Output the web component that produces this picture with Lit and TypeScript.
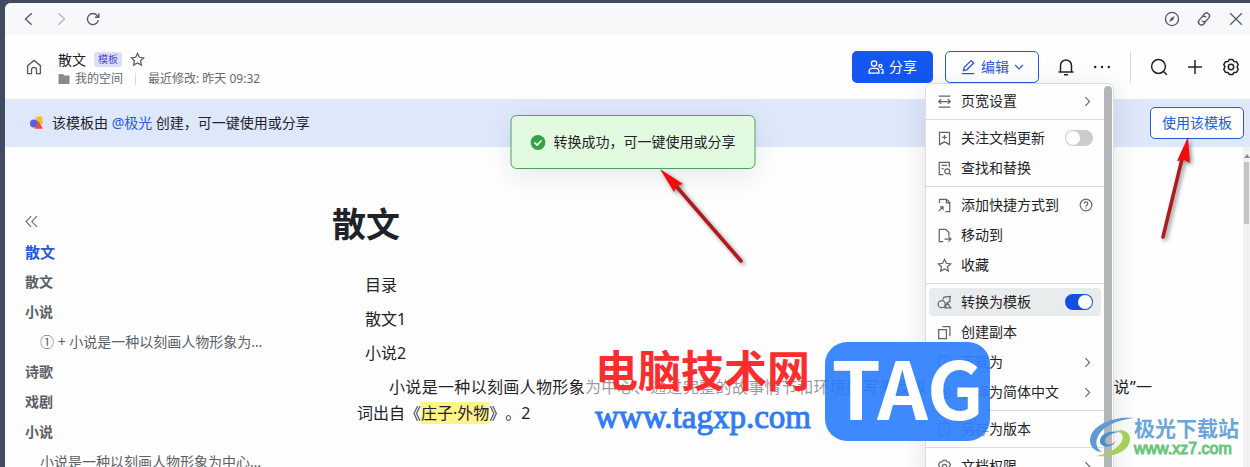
import { LitElement, html, css, svg, nothing } from "lit";
import { customElement, property } from "lit/decorators.js";
import { classMap } from "lit/directives/class-map.js";

/* Line icons, drawn on an 18 x 18 grid */
const ICONS: Record<string, unknown> = {
  back: svg`<path d="M12 2.5 5 9l7 6.5"/>`,
  forward: svg`<path d="M6 2.5 13 9l-7 6.5"/>`,
  reload: svg`<path d="M15 10.2A6.2 6.2 0 1 1 13.8 5.2L15.2 7M15.6 2.6V7h-4.4"/>`,
  compass: svg`<circle cx="9" cy="9" r="7.4"/><path d="M12.3 5.7 10.2 10.200 5.700 12.300 7.800 7.800Z" fill="currentColor" stroke="none"/>`,
  link: svg`<g transform="rotate(-50 9 9)"><path d="M8.200 12.300H4.500a3.300 3.300 0 0 1 0-6.600h4.200a3.300 3.300 0 0 1 3.200 4M9.800 5.700h3.700a3.300 3.300 0 0 1 0 6.600H9.300a3.300 3.300 0 0 1-3.200-4"/></g>`,
  close: svg`<path d="m2.500 2.500 13 13M15.500 2.500l-13 13"/>`,
  home: svg`<path d="M1.800 7.500 9 1.600l7.200 5.900v8.900h-4.400v-4.200a2.800 2.800 0 0 0-5.600 0v4.200H1.800Z"/>`,
  star: svg`<path d="m9 1.600 2.250 4.700 5.150.7-3.750 3.600.95 5.100L9 13.200l-4.600 2.500.95-5.100L1.600 7l5.150-.7Z"/>`,
  users: svg`<circle cx="6.800" cy="5.200" r="3"/><path d="M1.300 15.800v-2.300a3 3 0 0 1 3-3h4.900a3 3 0 0 1 3 3v2.300Z"/><circle cx="14" cy="7.700" r="1.700"/><path d="M14 11.300h1a2 2 0 0 1 2 2v2.500h-2.300"/>`,
  pencil: svg`<path d="m4 13 .8-3.700 7.700-7.500 2.900 2.800-7.700 7.600ZM2 16.500h14"/>`,
  down: svg`<path d="m2 5.500 7 7 7-7" stroke-width="2.200"/>`,
  right: svg`<path d="m5.500 2 7 7-7 7" stroke-width="1.800"/>`,
  bell: svg`<path d="M1.500 14.100h15M3.500 14V7.500a5.500 5.500 0 0 1 11 0V14M7 16.800h4"/>`,
  dots: svg`<g fill="currentColor" stroke="none"><circle cx="2.200" cy="9" r="1.200"/><circle cx="9" cy="9" r="1.200"/><circle cx="15.800" cy="9" r="1.200"/></g>`,
  search: svg`<circle cx="8.500" cy="8.500" r="6.900"/><path d="m13.500 13.500 3.300 3.300"/>`,
  plus: svg`<path d="M9 2v14M2 9h14"/>`,
  gear: svg`<path d="M7.300 1.500h3.400l1.300 2.100 2.500.1 1.700 2.900L15 9l1.200 2.400-1.700 2.900-2.500.1-1.300 2.100H7.300L6 14.400l-2.500-.1-1.700-2.900L3 9 1.800 6.600l1.700-2.900L6 3.600Z" stroke-linejoin="round"/><circle cx="9" cy="9" r="2.700"/>`,
  width: svg`<path d="M2 2.400h14M2 15.600h14M2 9h14M5 6.200 2 9l3 2.800M13 6.200 16 9l-3 2.800"/>`,
  follow: svg`<path d="M3 1.700h12v14.600l-6-3.300-6 3.300ZM9 4.700v5.600M6.200 7.500h5.600"/>`,
  find: svg`<path d="M7.500 16.300H2.700V1.700h12v5.800M5.500 5.300h6.500M5.500 9h2.500M14.800 14.800l2 2"/><circle cx="12.300" cy="12.300" r="3"/>`,
  shortcut: svg`<path d="M3 6V1.700h8.500L15.300 5.500v10.800H10M11.300 1.700v4h4M2 15.700l5-5M3.500 10.500H7.200v3.800"/>`,
  move: svg`<path d="M7.500 16.300H2.700V1.700h7.800l3.800 3.800v4M9 13.300h7.500M13.700 10.300l3 3-3 3"/>`,
  convert: svg`<path d="M7 5.500 8.500 2.500l7.500-.8-.8 6.300-3 1 4.300 6.500H9.500l3-6.500"/><circle cx="5.600" cy="11" r="4.200"/>`,
  copy: svg`<path d="M2 5.400h9.300v11H2ZM6.500 2h9v11.500"/>`,
  download: svg`<path d="M15.300 8V1.700H2.700v14.600h12.600v-2.500M7 11h9M13.300 8.200 16.200 11l-2.900 2.800"/>`,
  translate: svg`<circle cx="9" cy="9" r="7.300"/><path d="m6 12.200 3-7 3 7M7 10h4"/>`,
  version: svg`<path d="M8 16.300H2.700V1.700h12.600v8M5.800 5.500h6.400M5.800 9h4M10.500 13.500l2.300 2.300 4-4"/>`,
  help: svg`<circle cx="9" cy="9" r="7.500"/><path d="M6.700 7.200a2.300 2.300 0 1 1 3.500 2c-.8.500-1.200.8-1.200 1.700M9 12.300v1.300"/>`,
  collapse: svg`<path d="M8.500 1.500 1.500 9l7 7.500M16.500 1.500 9.500 9l7 7.500"/>`,
};

@customElement("line-icon")
class LineIcon extends LitElement {
  @property() name = "";
  static styles = css`
    :host { display: inline-flex; width: 16px; height: 16px; flex: none; }
    svg { width: 100%; height: 100%; fill: none; stroke: currentColor; stroke-width: 1.5; overflow: visible; }
  `;
  render() {
    return html`<svg viewBox="0 0 18 18" aria-hidden="true">${ICONS[this.name]}</svg>`;
  }
}

interface MenuEntry {
  icon: string;
  label: string;
  more?: boolean;
  help?: boolean;
  checked?: boolean;
}

const MENU: MenuEntry[][] = [
  [{ icon: "width", label: "页宽设置", more: true }],
  [
    { icon: "follow", label: "关注文档更新", checked: false },
    { icon: "find", label: "查找和替换" },
  ],
  [
    { icon: "shortcut", label: "添加快捷方式到", help: true },
    { icon: "move", label: "移动到" },
    { icon: "star", label: "收藏" },
  ],
  [
    { icon: "convert", label: "转换为模板", checked: true },
    { icon: "copy", label: "创建副本" },
    { icon: "download", label: "下载为", more: true },
    { icon: "translate", label: "翻译为简体中文", more: true },
  ],
  [{ icon: "version", label: "另存为版本" }],
  [{ icon: "gear", label: "文档权限", more: true }],
];

@customElement("doc-menu")
class DocMenu extends LitElement {
  static styles = css`
    :host {
      display: flex;
      box-sizing: border-box;
      width: 189px;
      border: 1px solid #dcdfe1;
      border-radius: 6px;
      background: #fefefe;
      box-shadow: 0 6px 28px rgba(31, 35, 41, 0.12);
      overflow: hidden;
      color: #1f2329;
    }
    .list { flex: 1; padding-top: 2px; }
    .group { display: grid; }
    .group + .group { border-top: 1px solid #d9dcde; margin-top: 3px; padding-top: 3px; }
    .row {
      display: flex;
      align-items: center;
      gap: 9px;
      box-sizing: border-box;
      width: calc(100% - 6px);
      height: 28px;
      margin: 1px 3px;
      padding: 0 8px;
      border: 0;
      border-radius: 4px;
      background: none;
      font: inherit;
      color: inherit;
      text-align: left;
    }
    .row.on { background: #e9ecec; }
    .text { flex: 1; white-space: nowrap; }
    line-icon { color: #5f666d; }
    .lead { width: 15px; height: 15px; }
    .more { width: 11px; height: 11px; }
    .help { width: 14px; height: 14px; }
    .switch {
      appearance: none;
      flex: none;
      width: 28px;
      height: 16px;
      margin: 0;
      padding: 1px;
      border-radius: 8px;
      background: #c8cccf;
      display: flex;
      box-sizing: border-box;
    }
    .switch::before { content: ""; width: 14px; height: 14px; border-radius: 50%; background: #fff; }
    .switch:checked { background: #144fe0; justify-content: flex-end; }
    .bar { width: 8px; margin: 2px 1px 0 0; border-radius: 4px; background: #b3b6b7; }
  `;
  row(e: MenuEntry) {
    const body = html`
      <line-icon class="lead" name=${e.icon}></line-icon>
      <span class="text">${e.label}</span>
      ${e.more ? html`<line-icon class="more" name="right"></line-icon>` : nothing}
      ${e.help ? html`<line-icon class="help" name="help"></line-icon>` : nothing}
    `;
    return e.checked === undefined
      ? html`<button class="row" type="button">${body}</button>`
      : html`<label class=${classMap({ row: true, on: e.checked })}>
          ${body}<input class="switch" type="checkbox" role="switch" .checked=${e.checked} />
        </label>`;
  }
  render() {
    return html`
      <div class="list">${MENU.map((g) => html`<div class="group">${g.map((e) => this.row(e))}</div>`)}</div>
      <div class="bar"></div>
    `;
  }
}

const OUTLINE = [
  { text: "散文", current: true },
  { text: "散文" },
  { text: "小说" },
  { text: "① + 小说是一种以刻画人物形象为中心", sub: true },
  { text: "诗歌" },
  { text: "戏剧" },
  { text: "小说" },
  { text: "小说是一种以刻画人物形象为中心、通过完整", sub: true },
];

@customElement("app-root")
class AppRoot extends LitElement {
  static styles = css`
    :host {
      display: block;
      position: relative;
      box-sizing: border-box;
      height: 100vh;
      overflow: hidden;
      padding: 3px 0 0 5px;
      background: #414b60;
      font-family: "Noto Sans", "Noto Sans CJK SC", sans-serif;
      font-size: 14px;
      line-height: 20px;
      color: #1f2329;
    }
    button, a { font: inherit; color: inherit; text-decoration: none; }
    button { border: 0; padding: 0; background: none; display: inline-flex; align-items: center; justify-content: center; white-space: nowrap; }
    .window { display: flex; flex-direction: column; height: 100%; background: #fefefe; border-radius: 6px 0 0 0; overflow: hidden; }
    .chrome { display: flex; align-items: center; gap: 16px; height: 32px; flex: none; padding: 0 6px 0 16px; background: #f7f8fa; color: #555b61; }
    .grow { flex: 1; }
    .chrome .dim { color: #b5b9bd; }
    .header { display: flex; align-items: center; height: 64px; flex: none; box-sizing: border-box; padding: 0 10px 0 21px; }
    .home { color: #555b61; margin-right: 16px; }
    .names { flex: 1; display: flex; flex-direction: column; padding-top: 3px; }
    .line { display: flex; align-items: center; }
    .title { margin: 0; font-size: 14px; font-weight: 400; }
    .tag { margin: 0 8px; padding: 0 4px; border-radius: 3px; background: #dcdff9; color: #504bd0; font-size: 10px; line-height: 15px; }
    .fav { color: #555b61; }
    .fav line-icon { width: 15px; height: 15px; }
    .meta { font-size: 12px; line-height: 18px; color: #646a73; gap: 5px; }
    .folder { width: 12px; height: 12px; fill: #858c92; }
    .sep { width: 1px; height: 12px; margin: 0 7px; background: #d5d8da; }
    .actions { display: flex; align-items: center; gap: 18px; }
    .actions line-icon { width: 18px; height: 18px; }
    .pair { display: flex; gap: 12px; }
    .btn { box-sizing: border-box; height: 32px; border-radius: 5px; gap: 5px; padding: 0 16px; }
    .actions .btn line-icon { width: 16px; height: 16px; }
    .actions .btn .caret { width: 10px; height: 10px; }
    .solid { background: #1456f0; color: #fff; }
    .outline { border: 1px solid #245bdb; color: #245bdb; background: #fff; padding: 0 14px; }
    .rule { width: 1px; height: 32px; margin: 0 1px; background: #d9dcde; }
    .banner { display: flex; align-items: center; gap: 8px; height: 48px; flex: none; padding: 0 6px 0 25px; background: #dfe7fb; }
    .banner .outline { padding: 0 11px; }
    .shapes { width: 14px; height: 14px; }
    .mention { color: #245bdb; }
    .body { flex: 1; min-height: 0; display: flex; }
    .side { width: 240px; flex: none; padding: 66px 0 0 20px; color: #5a6068; }
    .side line-icon { width: 13px; height: 13px; }
    .toc { list-style: none; margin: 4px 0 0; padding: 0; }
    .toc li { line-height: 30px; overflow: hidden; text-overflow: ellipsis; white-space: nowrap; font-weight: 600; }
    .toc .sub { padding-left: 15px; font-weight: 400; }
    .toc .current { color: #245bdb; font-size: 15px; font-weight: 700; }
    .doc { flex: 1; padding: 52px 91px 0 67px; font-size: 16px; line-height: 26px; text-spacing-trim: space-all; }
    .doc h1 { margin: 0 0 23px; font-size: 34px; line-height: 50px; }
    .doc p { margin: 0 0 8px 25px; padding-left: 8px; }
    .doc .para { padding-left: 0; text-indent: 32px; text-align: justify; }
    mark { background: #fff38a; color: inherit; }
    .scroll { width: 7px; flex: none; background: #f0f1f1; display: flex; flex-direction: column; align-items: center; }
    .tri { margin: 7px 0 4px; border: 3px solid transparent; border-top: 0; border-bottom: 4px solid #8a8d8f; }
    .thumb { width: 5px; height: 62px; background: #c1c3c4; }
    doc-menu { position: absolute; top: 83px; right: 136px; }
    .toast {
      position: absolute; top: 115px; left: calc(50% + 8px); transform: translateX(-50%);
      display: flex; align-items: center; gap: 8px; box-sizing: border-box; height: 54px; padding: 0 19px;
      border: 1px solid #4ba35b; border-radius: 6px; background: #e1fae0; white-space: nowrap;
      box-shadow: 0 8px 28px rgba(31, 35, 41, 0.1);
    }
    .toast svg { width: 15px; height: 15px; }
    .arrow { position: absolute; filter: drop-shadow(2px 2px 2px rgba(0, 0, 0, 0.45)); overflow: visible; }
    .first { left: 660px; top: 169px; width: 84px; height: 95px; }
    .second { right: 58px; top: 137px; width: 32px; height: 103px; }
    .site {
      position: absolute; left: 585px; top: 342px; display: flex; gap: 13px;
      background: rgba(254, 254, 254, 0.55); padding-left: 10px;
    }
    .site .words { width: 217px; }
    .words { display: flex; flex-direction: column; white-space: nowrap; }
    .zh { color: #fb2d2f; font: 700 43px/52px "Noto Sans CJK SC", sans-serif; }
    .url { color: #2f7cf6; font: 33px/47px "Liberation Serif", serif; -webkit-text-stroke: 1px #2f7cf6; }
    .badge {
      width: 165px; height: 99px; border-radius: 22px; background: rgba(31, 118, 255, 0.86); color: #fff; text-align: center;
      font: 700 79px/87px "Noto Sans CJK SC", sans-serif;
    }
    .mark { position: absolute; right: 12px; top: 415px; display: flex; align-items: center; }
    .mark svg { width: 44px; height: 42px; }
    .mark .words { width: 104px; }
    .cn { font: 700 21px/24px "Noto Sans CJK SC", sans-serif; color: #6aa6dc; }
    .com { font: 16px/19px "Liberation Sans", sans-serif; color: #6cc47c; -webkit-text-stroke: 1px #6cc47c; }
  `;

  render() {
    return html`
      <div class="window">
        <nav class="chrome">
          <button aria-label="后退"><line-icon name="back"></line-icon></button>
          <button class="dim" aria-label="前进"><line-icon name="forward"></line-icon></button>
          <button aria-label="刷新"><line-icon name="reload"></line-icon></button>
          <span class="grow"></span>
          <button aria-label="浏览器"><line-icon name="compass"></line-icon></button>
          <button aria-label="复制链接"><line-icon name="link"></line-icon></button>
          <button aria-label="关闭"><line-icon name="close"></line-icon></button>
        </nav>
        <header class="header">
          <button class="home" aria-label="主页"><line-icon name="home"></line-icon></button>
          <div class="names">
            <div class="line">
              <h2 class="title">散文</h2><span class="tag">模板</span>
              <button class="fav" aria-label="收藏"><line-icon name="star"></line-icon></button>
            </div>
            <div class="line meta">
              <svg class="folder" viewBox="0 0 12 12" aria-hidden="true"><path d="M1 1h4l1.200 1.500H11.500V10.500a.5.500 0 0 1-.5.500H1a.5.500 0 0 1-.5-.5V1.500A.5.500 0 0 1 1 1Z"/></svg>
              <a href="#space">我的空间</a><span class="sep"></span><span>最近修改: 昨天 09:32</span>
            </div>
          </div>
          <div class="actions">
            <div class="pair">
              <button class="btn solid"><line-icon name="users"></line-icon>分享</button>
              <button class="btn outline"><line-icon name="pencil"></line-icon>编辑<line-icon class="caret" name="down"></line-icon></button>
            </div>
            <button aria-label="通知"><line-icon name="bell"></line-icon></button>
            <button aria-label="更多"><line-icon name="dots"></line-icon></button>
            <span class="rule"></span>
            <button aria-label="搜索"><line-icon name="search"></line-icon></button>
            <button aria-label="新建"><line-icon name="plus"></line-icon></button>
            <button aria-label="设置"><line-icon name="gear"></line-icon></button>
          </div>
        </header>
        <section class="banner">
          <svg class="shapes" viewBox="0 0 14 14" aria-hidden="true">
            <path d="M5.500 1 12 .3l1 7.700-6 .5Z" fill="#f8bd2d"/><circle cx="4" cy="7.500" r="4" fill="#5b5fdc"/><path d="m8.500 5 4.500 7.800H4.500Z" fill="#ee4a4a"/>
          </svg>
          <span class="grow">该模板由 <a class="mention" href="#user">@极光</a> 创建，可一键使用或分享</span>
          <button class="btn outline">使用该模板</button>
        </section>
        <div class="body">
          <aside class="side">
            <button aria-label="收起目录"><line-icon name="collapse"></line-icon></button>
            <ul class="toc">
              ${OUTLINE.map((o) => html`<li class=${classMap({ sub: !!o.sub, current: !!o.current })}><a href="#toc">${o.text}</a></li>`)}
            </ul>
          </aside>
          <main class="doc">
            <h1>散文</h1>
            <p>目录</p>
            <p>散文1</p>
            <p>小说2</p>
            <p class="para">小说是一种以刻画人物形象为中心、通过完整的故事情节和环境描写来反映社会生活的文学体裁。“小说”一词出自《<mark>庄子·外物</mark>》。2</p>
          </main>
          <div class="scroll"><span class="tri"></span><span class="thumb"></span></div>
        </div>
      </div>
      <doc-menu></doc-menu>
      <div class="toast" role="status">
        <svg viewBox="0 0 16 16" aria-hidden="true"><circle cx="8" cy="8" r="8" fill="#35a344"/><path d="m4.300 8.200 2.700 2.600 4.800-4.900" fill="none" stroke="#fff" stroke-width="1.800"/></svg>
        转换成功，可一键使用或分享
      </div>
      <svg class="arrow first" viewBox="0 0 84 95" aria-hidden="true"><path d="m16 17 65 75" stroke="#b01a1c" stroke-width="3.500" stroke-linecap="round"/><path d="m0 0 23 15-6 2-3 6Z" fill="#f00c0c"/></svg>
      <svg class="arrow second" viewBox="0 0 32 103" aria-hidden="true"><path d="m22 22-19 78" stroke="#b01a1c" stroke-width="3.500" stroke-linecap="round"/><path d="m28 0 2 26-6-3-7 1Z" fill="#f00c0c"/></svg>
      <div class="site">
        <div class="words"><span class="zh">电脑技术网</span><span class="url">www.tagxp.com</span></div>
        <div class="badge">TAG</div>
      </div>
      <div class="mark">
        <svg viewBox="0 0 44 42" aria-hidden="true">
          <path d="M44 2C25 0 1 8 0 24c0 8 6 12 12 12C2 30 6 16 20 9 27 5 35 3 44 2Z" fill="#5a9bd8"/>
          <path d="M6 40c17 2 34-5 34-17 0-8-8-10-15-8 9 1 10 8 4 14-5 6-13 9-23 11Z" fill="#a5d05b"/>
          <path d="M29 16c-11-2-19 3-19 9 0 7 12 8 16 0-3 4-11 5-11 0 0-4 6-8 14-9Z" fill="#4b8ed0"/>
        </svg>
        <div class="words"><span class="cn">极光下载站</span><span class="com">www.xz7.com</span></div>
      </div>
    `;
  }
}
